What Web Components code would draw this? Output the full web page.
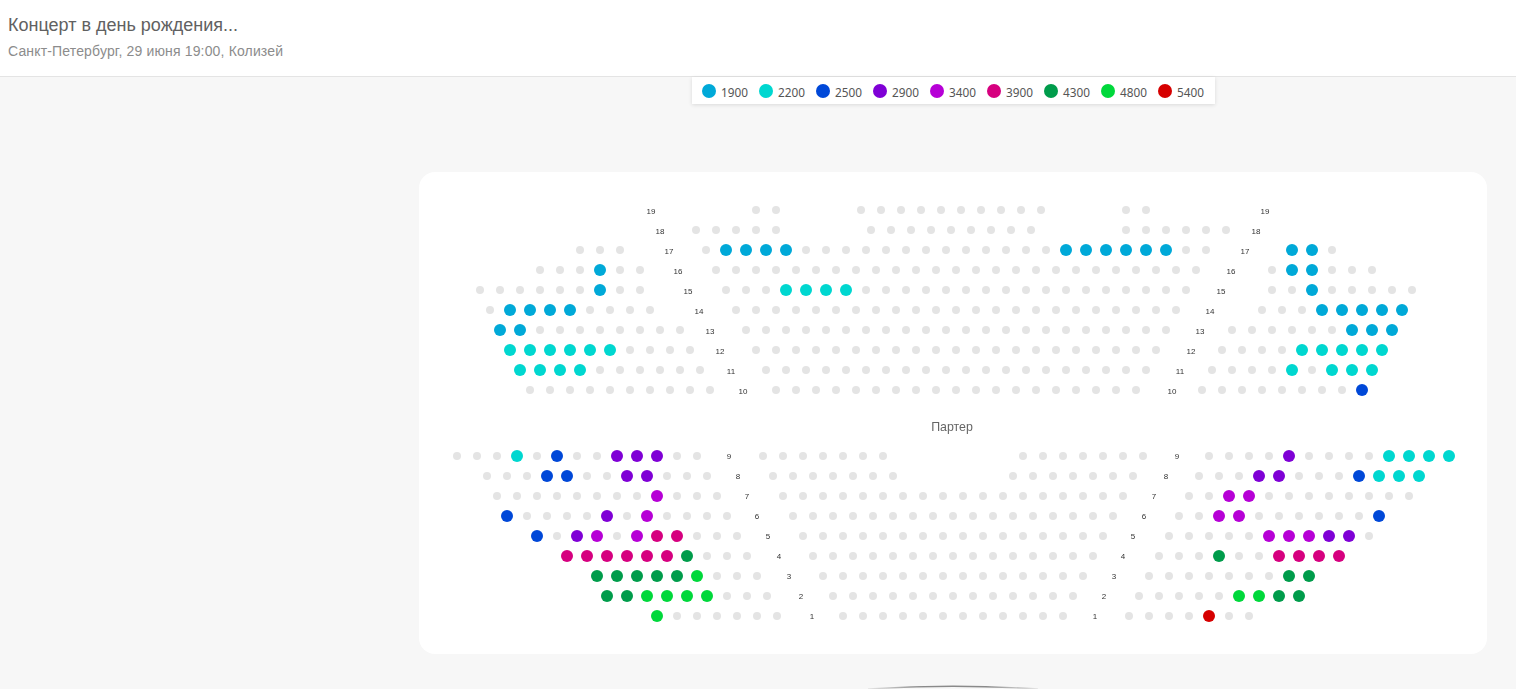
<!DOCTYPE html>
<html lang="ru">
<head>
<meta charset="utf-8">
<title>Концерт в день рождения...</title>
<style>
  html, body { margin: 0; height: 100%; overflow: hidden; background: #f7f7f7; }
</style>
</head>
<body>
<concert-page>
  <event-header>
    <span slot="title">Концерт в день рождения...</span>
    <span slot="place">Санкт-Петербург, 29 июня 19:00, Колизей</span>
  </event-header>
  <price-legend>
    <price-item color="#00a9d8">1900</price-item>
    <price-item color="#00d7d0">2200</price-item>
    <price-item color="#0048d8">2500</price-item>
    <price-item color="#7f00d6">2900</price-item>
    <price-item color="#b600d6">3400</price-item>
    <price-item color="#d6007f">3900</price-item>
    <price-item color="#009c4b">4300</price-item>
    <price-item color="#00d83b">4800</price-item>
    <price-item color="#d60000">5400</price-item>
  </price-legend>
  <seat-map></seat-map>
  <stage-arc></stage-arc>
</concert-page>

<script>
class ConcertPage extends HTMLElement {
  constructor() {
    super();
    this.attachShadow({mode: 'open'});
    this.shadowRoot.innerHTML = `
    <style>
      :host { display: block; height: 689px; overflow: hidden; }
      main {
        display: flex;
        flex-direction: column;
        align-items: center;
        padding: 0 29px 0 419px;
      }
      ::slotted(price-legend) { margin: 0 0 68px 1px; }
      ::slotted(seat-map) { margin-bottom: 31px; }
    </style>
    <slot name="top"></slot>
    <main><slot></slot></main>
    `;
  }
  connectedCallback() {
    this.querySelector('event-header').slot = 'top';
  }
}

class EventHeader extends HTMLElement {
  constructor() {
    super();
    this.attachShadow({mode: 'open'});
    this.shadowRoot.innerHTML = `
    <style>
      :host {
        display: block;
        box-sizing: border-box;
        height: 77px;
        padding: 14px 8px 0;
        background: #fff;
        border-bottom: 1px solid #e4e4e4;
        font-family: "Liberation Sans", Arial, sans-serif;
      }
      .title { font-size: 18px; line-height: 22px; color: #616161; }
      .place { font-size: 14px; line-height: 16px; margin-top: 7px; color: #8c8c8c; letter-spacing: .155px; }
    </style>
    <div class="title"><slot name="title"></slot></div>
    <div class="place"><slot name="place"></slot></div>
    `;
  }
}

class PriceLegend extends HTMLElement {
  constructor() {
    super();
    this.attachShadow({mode: 'open'});
    this.shadowRoot.innerHTML = `
    <style>
      :host {
        display: flex;
        align-items: center;
        gap: 11px;
        box-sizing: border-box;
        height: 27px;
        padding: 1px 11px 0 10px;
        background: #fff;
        box-shadow: 0 1px 4px rgba(0, 0, 0, .12);
      }
    </style>
    <slot></slot>
    `;
  }
}

class PriceItem extends HTMLElement {
  constructor() {
    super();
    this.attachShadow({mode: 'open'});
    this.shadowRoot.innerHTML = `
    <style>
      :host {
        display: flex;
        align-items: center;
        gap: 5px;
        width: 46px;
        font-family: "Noto Sans", sans-serif;
        font-size: 11.8px;
        color: #555;
      }
      i { width: 14px; height: 14px; border-radius: 50%; flex: none; }
      span { position: relative; top: 1px; }
    </style>
    <i style="background: ${this.getAttribute('color')}"></i>
    <span><slot></slot></span>
    `;
  }
}

const C = {
  a: '#00a9d8', b: '#00d7d0', c: '#0048d8', d: '#7f00d6', e: '#b600d6',
  f: '#d6007f', g: '#009c4b', h: '#00d83b', i: '#d60000'
};

// one row: y, label x positions, then runs of seats [price, first x, last x]; no price = free seat
const ROWS = [
  [210, 19, [651, 1265], [[0, 756, 776], [0, 861, 1041], [0, 1126, 1146]]],
  [230, 18, [660, 1256], [[0, 696, 776], [0, 871, 1031], [0, 1126, 1226]]],
  [250, 17, [669, 1245], [[0, 580, 620], [0, 706, 706], ['a', 726, 786], [0, 806, 1046], ['a', 1066, 1166], [0, 1186, 1206], ['a', 1292, 1312], [0, 1332, 1332]]],
  [270, 16, [678, 1231], [[0, 540, 580], ['a', 600, 600], [0, 620, 640], [0, 716, 1196], [0, 1272, 1272], ['a', 1292, 1312], [0, 1332, 1372]]],
  [290, 15, [688, 1221], [[0, 480, 580], ['a', 600, 600], [0, 620, 640], [0, 726, 766], ['b', 786, 846], [0, 866, 1186], [0, 1272, 1292], ['a', 1312, 1312], [0, 1332, 1412]]],
  [310, 14, [699, 1210], [[0, 490, 490], ['a', 510, 570], [0, 590, 650], [0, 736, 1176], [0, 1262, 1302], ['a', 1322, 1402]]],
  [330, 13, [710, 1200], [['a', 500, 520], [0, 540, 680], [0, 746, 1166], [0, 1232, 1332], ['a', 1352, 1392]]],
  [350, 12, [720, 1191], [['b', 510, 610], [0, 630, 690], [0, 756, 1156], [0, 1222, 1282], ['b', 1302, 1382]]],
  [370, 11, [731, 1180], [['b', 520, 580], [0, 600, 700], [0, 766, 1146], [0, 1212, 1272], ['b', 1292, 1292], [0, 1312, 1312], ['b', 1332, 1372]]],
  [390, 10, [743, 1172], [[0, 530, 710], [0, 776, 1136], [0, 1202, 1342], ['c', 1362, 1362]]],

  [456, 9, [729, 1177], [[0, 457, 497], ['b', 517, 517], [0, 537, 537], ['c', 557, 557], [0, 577, 597], ['d', 617, 657], [0, 677, 697], [0, 763, 883], [0, 1023, 1143], [0, 1209, 1269], ['d', 1289, 1289], [0, 1309, 1369], ['b', 1389, 1449]]],
  [476, 8, [738, 1166], [[0, 487, 527], ['c', 547, 567], [0, 587, 607], ['d', 627, 647], [0, 667, 707], [0, 773, 893], [0, 1013, 1133], [0, 1199, 1239], ['d', 1259, 1279], [0, 1299, 1339], ['c', 1359, 1359], ['b', 1379, 1419]]],
  [496, 7, [747, 1154], [[0, 497, 637], ['e', 657, 657], [0, 677, 717], [0, 783, 1123], [0, 1189, 1209], ['e', 1229, 1249], [0, 1269, 1409]]],
  [516, 6, [757, 1144], [['c', 507, 507], [0, 527, 587], ['d', 607, 607], [0, 627, 627], ['e', 647, 647], [0, 667, 727], [0, 793, 1113], [0, 1179, 1199], ['e', 1219, 1239], [0, 1259, 1359], ['c', 1379, 1379]]],
  [536, 5, [768, 1133], [['c', 537, 537], [0, 557, 557], ['d', 577, 577], ['e', 597, 597], [0, 617, 617], ['e', 637, 637], ['f', 657, 677], [0, 697, 737], [0, 803, 1103], [0, 1169, 1249], ['e', 1269, 1309], ['d', 1329, 1349], [0, 1369, 1369]]],
  [556, 4, [779, 1123], [['f', 567, 667], ['g', 687, 687], [0, 707, 747], [0, 813, 1093], [0, 1159, 1199], ['g', 1219, 1219], [0, 1239, 1259], ['f', 1279, 1339]]],
  [576, 3, [789, 1114], [['g', 597, 677], ['h', 697, 697], [0, 717, 757], [0, 823, 1083], [0, 1149, 1269], ['g', 1289, 1309]]],
  [596, 2, [801, 1104], [['g', 607, 627], ['h', 647, 707], [0, 727, 767], [0, 833, 1073], [0, 1139, 1219], ['h', 1239, 1259], ['g', 1279, 1299]]],
  [616, 1, [812, 1095], [['h', 657, 657], [0, 677, 777], [0, 843, 1063], [0, 1129, 1189], ['i', 1209, 1209], [0, 1229, 1249]]]
];

// ROWS are written in page pixels, the card starts here
const MAP_X = 419, MAP_Y = 172;

class SeatMap extends HTMLElement {
  constructor() {
    super();
    this.attachShadow({mode: 'open'});
    let out = '';
    for (const [y, num, labels, runs] of ROWS) {
      // balcony numbers sit a pixel lower than the stalls ones
      const drop = y < 400 ? 4 : 3;
      for (const x of labels) {
        out += `<text x="${x - MAP_X}" y="${y - MAP_Y + drop}">${num}</text>`;
      }
      for (const [price, from, to] of runs) {
        for (let x = from; x <= to; x += 20) {
          out += price
            ? `<circle cx="${x - MAP_X}" cy="${y - MAP_Y}" r="6" fill="${C[price]}"/>`
            : `<circle cx="${x - MAP_X}" cy="${y - MAP_Y}" r="4" fill="#e4e4e4"/>`;
        }
      }
    }
    this.shadowRoot.innerHTML = `
    <style>
      :host {
        display: block;
        width: 1068px;
        height: 482px;
        background: #fff;
        border-radius: 16px;
      }
      svg { display: block; will-change: transform; }
      text {
        font-family: "Liberation Sans", Arial, sans-serif;
        font-size: 8px;
        fill: #333;
        text-anchor: middle;
      }
      .zone { font-size: 12.4px; fill: #666; }
    </style>
    <svg width="1068" height="482" viewBox="0 0 1068 482">
      ${out}
      <text class="zone" x="533" y="258.5">Партер</text>
    </svg>
    `;
  }
}

class StageArc extends HTMLElement {
  constructor() {
    super();
    this.attachShadow({mode: 'open'});
    this.shadowRoot.innerHTML = `
    <style>
      :host { display: block; width: 170px; height: 8px; }
      svg { display: block; }
    </style>
    <svg width="170" height="8" viewBox="0 0 170 8">
      <defs>
        <linearGradient id="fade">
          <stop offset="0" stop-color="#999" stop-opacity=".2"/>
          <stop offset=".3" stop-color="#8a8a8a"/>
          <stop offset=".7" stop-color="#8a8a8a"/>
          <stop offset="1" stop-color="#999" stop-opacity=".2"/>
        </linearGradient>
      </defs>
      <path d="M0 4 Q85 -1.5 170 4" fill="none" stroke="url(#fade)" stroke-width="1.4"/>
    </svg>
    `;
  }
}

customElements.define('concert-page', ConcertPage);
customElements.define('event-header', EventHeader);
customElements.define('price-legend', PriceLegend);
customElements.define('price-item', PriceItem);
customElements.define('seat-map', SeatMap);
customElements.define('stage-arc', StageArc);
</script>
</body>
</html>
